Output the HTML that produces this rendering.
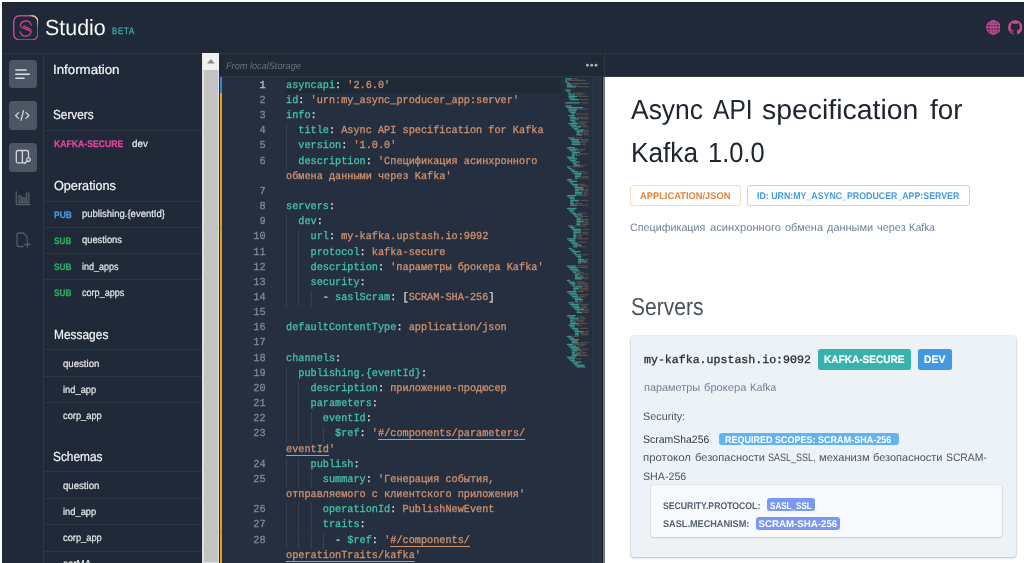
<!DOCTYPE html>
<html lang="ru">
<head>
<meta charset="utf-8">
<title>AsyncAPI Studio</title>
<style>
html,body{margin:0;padding:0}
body{width:1024px;height:563px;overflow:hidden;background:#fff;position:relative;font-family:"Liberation Sans",sans-serif;text-rendering:geometricPrecision}
#app{position:absolute;left:2px;top:2px;width:1022px;height:561px;background:#1f2937;overflow:hidden}
#app>*{position:absolute;left:-2px;top:-2px;width:1024px;height:563px;margin:0}
.t{position:absolute;white-space:pre;margin:0;font-weight:400;transform-origin:0 50%;filter:blur(.35px)}
.code{position:absolute;left:0;top:0;width:604px;height:563px;overflow:hidden;font-family:"Liberation Mono",monospace;font-size:10.8px;line-height:15.155px}
.cl{position:absolute;left:0;width:604px;height:15.155px;white-space:pre;filter:blur(.35px)}
.cl i{position:absolute;left:226px;width:39.600px;text-align:right;font-style:normal;color:#858b94;transform:scaleX(0.9463);transform-origin:100% 50%;-webkit-text-stroke:.25px currentColor}
.cl i.a{color:#c6c6c6}
.cl .c{position:absolute;left:286px;transform:scaleX(0.9463);transform-origin:0 50%}
.cl b{font-weight:400;-webkit-text-stroke:.3px currentColor}
.k{color:#45c2a8}.s{color:#d0916f}.d{color:#d4d4d4}
.u{text-decoration:underline;text-underline-offset:3px;text-decoration-skip-ink:none;text-decoration-thickness:1px}
</style>
</head>
<body>
<div id="app">
<header>
<div style="position:absolute;left:0;top:52.8px;width:1024px;height:1px;background:#2c3645"></div>
<svg style="position:absolute;left:12.9px;top:14.6px" width="25.6" height="25.6" viewBox="0 0 25.6 25.6" fill="none">
<defs><linearGradient id="lg" gradientUnits="userSpaceOnUse" x1="16.2" y1=".8" x2="18.6" y2="-.8"><stop offset="0" stop-color="#d6409a"/><stop offset="1" stop-color="#eec3a2"/></linearGradient></defs>
<rect x=".7" y=".7" width="24.2" height="24.3" rx="6" stroke="url(#lg)" stroke-width="1.4"/>
<g stroke="#d6409a" stroke-width="1.3" stroke-linecap="round" transform="translate(0 .7)">
<path d="M7.2 10.3a5.6 5.6 0 0 1 11-.8"/>
<path d="M18.2 15.300a5.600 5.600 0 0 1-11 .9"/>
<path d="M8 11.300L16.900 15.300M10.700 10.500L17.500 13.700"/>
</g>
</svg>
<span class="t" style="left:45.20px;top:13.18px;font-size:22px;line-height:29px;color:#f9fafb;transform:scaleX(0.9730);">Studio</span>
<span class="t" style="left:111.90px;top:25.28px;font-size:9.3px;line-height:12px;color:#3aa6a2;letter-spacing:0.900px;transform:scaleX(0.8403);-webkit-text-stroke:.35px #3aa6a2;">BETA</span>
<svg style="position:absolute;left:985.700px;top:20px" width="14.800" height="14.800" viewBox="0 0 24 24" fill="none" stroke="#cf4593" stroke-width="1.900">
<circle cx="12" cy="12" r="10.800" fill="#cf4593" fill-opacity=".3"/><ellipse cx="12" cy="12" rx="4.500" ry="10.800"/><path d="M12 1.200v21.600M1.200 12h21.600M3 6.600h18M3 17.400h18"/></svg>
<svg style="position:absolute;left:1007.600px;top:20.200px" width="14.500" height="14.500" viewBox="0 0 24 24" fill="#cf4593"><path d="M12 .3C5.400.3 0 5.700 0 12.300c0 5.300 3.400 9.800 8.200 11.400.6.100.8-.3.8-.6v-2c-3.300.7-4-1.600-4-1.600-.5-1.400-1.300-1.800-1.300-1.800-1.100-.7.100-.7.100-.7 1.200.1 1.800 1.200 1.800 1.200 1.100 1.800 2.800 1.300 3.500 1 .1-.8.4-1.300.8-1.600-2.700-.3-5.500-1.300-5.500-5.900 0-1.300.5-2.400 1.200-3.200-.1-.3-.5-1.500.1-3.200 0 0 1-.3 3.300 1.200 1-.3 2-.4 3-.4s2 .1 3 .4c2.300-1.500 3.300-1.200 3.300-1.200.6 1.700.2 2.900.1 3.200.8.800 1.200 1.900 1.200 3.200 0 4.600-2.800 5.600-5.500 5.900.4.400.8 1.100.8 2.200v3.300c0 .3.200.7.800.6 4.800-1.600 8.200-6.100 8.200-11.400C24 5.700 18.600.3 12 .3z"/></svg>
</header>
<aside>
<div style="position:absolute;left:43px;top:53px;width:1px;height:510px;background:#2c3645"></div>
<div style="position:absolute;left:8.80px;top:59.60px;width:28.40px;height:28.90px;background:#4b5563;border-radius:3.5px;"></div>
<div style="position:absolute;left:8.80px;top:101.30px;width:28.40px;height:28.90px;background:#4b5563;border-radius:3.5px;"></div>
<div style="position:absolute;left:8.80px;top:142.90px;width:28.40px;height:28.90px;background:#4b5563;border-radius:3.5px;"></div>
<svg style="position:absolute;left:14px;top:65.6px" width="18" height="16" viewBox="0 0 18 16" stroke="#dcdfe3" stroke-width="1.5" stroke-linecap="round" fill="none"><path d="M1.8 4.1h10.400M1.8 8.15h13.600M1.800 12.200h8.200"/></svg>
<svg style="position:absolute;left:13.9px;top:108px" width="17" height="15" viewBox="0 0 17 15" stroke="#d3d6db" stroke-width="1.3" stroke-linecap="round" stroke-linejoin="round" fill="none"><path d="M4.500 4.600L1.600 7.500l2.900 2.900M12 4.600l2.900 2.900-2.900 2.900M9.600 2.600L7 12.400"/></svg>
<svg style="position:absolute;left:15px;top:149px" width="17" height="17" viewBox="0 0 17 17" stroke="#d3d6db" stroke-width="1.3" stroke-linecap="round" stroke-linejoin="round" fill="none"><path d="M9.800 13.800H2.800a1.500 1.500 0 0 1-1.500-1.500V3a1.500 1.500 0 0 1 1.500-1.500h9.200a1.500 1.500 0 0 1 1.500 1.500v5.300M7.400 1.500v12.300"/><circle cx="13.500" cy="10.700" r="1.800"/><path d="M12.200 12l-2.400 2.600"/></svg>
<svg style="position:absolute;left:14.5px;top:189.500px" width="16" height="16" viewBox="0 0 16 16" stroke="#535d6c" stroke-width="1.3" stroke-linecap="round" stroke-linejoin="round" fill="none"><path d="M1.300 1.800v12.700h13.400"/><rect x="3.900" y="6.200" width="2.300" height="6.300"/><rect x="7.700" y="7.800" width="2.300" height="4.700"/><rect x="11.500" y="3.200" width="2.300" height="9.300"/></svg>
<svg style="position:absolute;left:15.500px;top:231.500px" width="16" height="17" viewBox="0 0 16 17" stroke="#535d6c" stroke-width="1.300" stroke-linecap="round" stroke-linejoin="round" fill="none"><path d="M7 14.500H2.600A1.600 1.600 0 0 1 1 12.900V2.600A1.600 1.600 0 0 1 2.600 1h4.800l3.600 3.600v3.900M11.500 10v5M9 12.500h5"/></svg>
</aside>
<nav>
<span class="t" style="left:52.90px;top:60.93px;font-size:13.2px;line-height:17px;color:#f3f4f6;transform:scaleX(1.0071);-webkit-text-stroke:.22px currentColor;">Information</span>
<span class="t" style="left:53.20px;top:106.43px;font-size:13.2px;line-height:17px;color:#f3f4f6;transform:scaleX(0.8927);-webkit-text-stroke:.22px currentColor;">Servers</span>
<div style="position:absolute;left:44.00px;top:129.50px;width:158.00px;height:1.00px;background:#2c3645;"></div>
<span class="t" style="left:53.80px;top:139.07px;font-size:9.6px;line-height:12px;color:#e0479e;transform:scaleX(0.9010);font-weight:700;-webkit-text-stroke:.25px #e0479e;">KAFKA-SECURE</span>
<span class="t" style="left:132.00px;top:138.40px;font-size:10.1px;line-height:13px;color:#e5e7eb;transform:scaleX(0.9702);-webkit-text-stroke:.22px currentColor;">dev</span>
<span class="t" style="left:53.60px;top:176.83px;font-size:13.2px;line-height:17px;color:#f3f4f6;transform:scaleX(0.9586);-webkit-text-stroke:.22px currentColor;">Operations</span>
<div style="position:absolute;left:44.00px;top:200.70px;width:158.00px;height:1.00px;background:#2c3645;"></div>
<span class="t" style="left:53.80px;top:208.98px;font-size:9.3px;line-height:12px;color:#4299e1;transform:scaleX(0.9116);font-weight:700;-webkit-text-stroke:.3px #4299e1;">PUB</span>
<span class="t" style="left:82.00px;top:208.20px;font-size:10.1px;line-height:13px;color:#e5e7eb;transform:scaleX(0.9414);-webkit-text-stroke:.22px currentColor;">publishing.{eventId}</span>
<div style="position:absolute;left:44.00px;top:226.60px;width:158.00px;height:1.00px;background:#2c3645;"></div>
<span class="t" style="left:53.80px;top:235.13px;font-size:9.3px;line-height:12px;color:#2fa862;transform:scaleX(0.8861);font-weight:700;-webkit-text-stroke:.3px #2fa862;">SUB</span>
<span class="t" style="left:82.00px;top:234.35px;font-size:10.1px;line-height:13px;color:#e5e7eb;transform:scaleX(0.9251);-webkit-text-stroke:.22px currentColor;">questions</span>
<div style="position:absolute;left:44.00px;top:252.75px;width:158.00px;height:1.00px;background:#2c3645;"></div>
<span class="t" style="left:53.80px;top:261.28px;font-size:9.3px;line-height:12px;color:#2fa862;transform:scaleX(0.8861);font-weight:700;-webkit-text-stroke:.3px #2fa862;">SUB</span>
<span class="t" style="left:82.00px;top:260.50px;font-size:10.1px;line-height:13px;color:#e5e7eb;transform:scaleX(0.8927);-webkit-text-stroke:.22px currentColor;">ind_apps</span>
<div style="position:absolute;left:44.00px;top:278.90px;width:158.00px;height:1.00px;background:#2c3645;"></div>
<span class="t" style="left:53.80px;top:287.43px;font-size:9.3px;line-height:12px;color:#2fa862;transform:scaleX(0.8861);font-weight:700;-webkit-text-stroke:.3px #2fa862;">SUB</span>
<span class="t" style="left:82.00px;top:286.65px;font-size:10.1px;line-height:13px;color:#e5e7eb;transform:scaleX(0.8989);-webkit-text-stroke:.22px currentColor;">corp_apps</span>
<span class="t" style="left:53.60px;top:326.13px;font-size:13.2px;line-height:17px;color:#f3f4f6;transform:scaleX(0.9042);-webkit-text-stroke:.22px currentColor;">Messages</span>
<div style="position:absolute;left:44.00px;top:348.50px;width:158.00px;height:1.00px;background:#2c3645;"></div>
<span class="t" style="left:62.80px;top:357.60px;font-size:10.1px;line-height:13px;color:#e5e7eb;transform:scaleX(0.9532);-webkit-text-stroke:.22px currentColor;">question</span>
<div style="position:absolute;left:44.00px;top:376.00px;width:158.00px;height:1.00px;background:#2c3645;"></div>
<span class="t" style="left:62.80px;top:383.75px;font-size:10.1px;line-height:13px;color:#e5e7eb;transform:scaleX(0.9236);-webkit-text-stroke:.22px currentColor;">ind_app</span>
<div style="position:absolute;left:44.00px;top:402.15px;width:158.00px;height:1.00px;background:#2c3645;"></div>
<span class="t" style="left:62.80px;top:409.90px;font-size:10.1px;line-height:13px;color:#e5e7eb;transform:scaleX(0.9212);-webkit-text-stroke:.22px currentColor;">corp_app</span>
<span class="t" style="left:53.20px;top:448.13px;font-size:13.2px;line-height:17px;color:#f3f4f6;transform:scaleX(0.9014);-webkit-text-stroke:.22px currentColor;">Schemas</span>
<div style="position:absolute;left:44.00px;top:471.00px;width:158.00px;height:1.00px;background:#2c3645;"></div>
<span class="t" style="left:62.80px;top:479.80px;font-size:10.1px;line-height:13px;color:#e5e7eb;transform:scaleX(0.9532);-webkit-text-stroke:.22px currentColor;">question</span>
<div style="position:absolute;left:44.00px;top:498.20px;width:158.00px;height:1.00px;background:#2c3645;"></div>
<span class="t" style="left:62.80px;top:505.95px;font-size:10.1px;line-height:13px;color:#e5e7eb;transform:scaleX(0.9236);-webkit-text-stroke:.22px currentColor;">ind_app</span>
<div style="position:absolute;left:44.00px;top:524.35px;width:158.00px;height:1.00px;background:#2c3645;"></div>
<span class="t" style="left:62.80px;top:532.10px;font-size:10.1px;line-height:13px;color:#e5e7eb;transform:scaleX(0.9212);-webkit-text-stroke:.22px currentColor;">corp_app</span>
<div style="position:absolute;left:44.00px;top:550.50px;width:158.00px;height:1.00px;background:#2c3645;"></div>
<span class="t" style="left:62.80px;top:558.25px;font-size:10.1px;line-height:13px;color:#e5e7eb;transform:scaleX(0.9664);-webkit-text-stroke:.22px currentColor;">corMA</span>
<div style="position:absolute;left:44.00px;top:576.65px;width:158.00px;height:1.00px;background:#2c3645;"></div>
<div style="position:absolute;left:202.30px;top:53.30px;width:16.80px;height:509.70px;background:#dcdfe3;"></div>
<div style="position:absolute;left:202.30px;top:53.30px;width:16.80px;height:16.70px;background:#f1f1f1;"></div>
<div style="position:absolute;left:204.00px;top:70.00px;width:14.00px;height:492.20px;background:#c3c3c3;"></div>
<svg style="position:absolute;left:206.800px;top:59.400px" width="7.800" height="4.600" viewBox="0 0 8 4.600"><path d="M4 0L8 4.600H0z" fill="#8a8a8a"/></svg>
</nav>
<section>
<div style="position:absolute;left:219.10px;top:76.60px;width:384.90px;height:486.40px;background:#252f3f;"></div>
<div style="position:absolute;left:219.10px;top:76.20px;width:804.90px;height:0.80px;background:#2c3645;"></div>
<span class="t" style="left:226.30px;top:60.97px;font-size:9.6px;line-height:12px;color:#69717e;transform:scaleX(0.9549);font-style:italic;">From localStorage</span>
<svg style="position:absolute;left:584px;top:62px" width="16" height="7" viewBox="0 0 16 7" fill="#a9afb8"><circle cx="3.400" cy="3.300" r="1.450"/><circle cx="7.700" cy="3.300" r="1.450"/><circle cx="12" cy="3.300" r="1.450"/></svg>
<div style="position:absolute;left:219.80px;top:77.00px;width:2.70px;height:15.60px;background:#3b82d6;"></div>
<div style="position:absolute;left:219.80px;top:92.60px;width:2.70px;height:470.40px;background:#e5a00d;"></div>
<div style="position:absolute;left:219.80px;top:227.50px;width:2.70px;height:1.30px;background:#b88a3a;"></div>
<div style="position:absolute;left:219.80px;top:530.50px;width:2.70px;height:1.30px;background:#b88a3a;"></div>
<div style="position:absolute;left:286.00px;top:77.60px;width:274.50px;height:15.00px;background:#1f2a37;"></div>
<div class="code"><div style="position:absolute;left:286.00px;top:124.31px;width:0.80px;height:15.16px;background:#364152;"></div><div style="position:absolute;left:286.00px;top:139.47px;width:0.80px;height:15.16px;background:#364152;"></div><div style="position:absolute;left:286.00px;top:154.62px;width:0.80px;height:15.16px;background:#364152;"></div><div style="position:absolute;left:286.00px;top:215.24px;width:0.80px;height:15.16px;background:#364152;"></div><div style="position:absolute;left:286.00px;top:230.40px;width:0.80px;height:15.16px;background:#364152;"></div><div style="position:absolute;left:298.27px;top:230.40px;width:0.80px;height:15.16px;background:#364152;"></div><div style="position:absolute;left:286.00px;top:245.55px;width:0.80px;height:15.16px;background:#364152;"></div><div style="position:absolute;left:298.27px;top:245.55px;width:0.80px;height:15.16px;background:#364152;"></div><div style="position:absolute;left:286.00px;top:260.71px;width:0.80px;height:15.15px;background:#364152;"></div><div style="position:absolute;left:298.27px;top:260.71px;width:0.80px;height:15.15px;background:#364152;"></div><div style="position:absolute;left:286.00px;top:275.87px;width:0.80px;height:15.15px;background:#364152;"></div><div style="position:absolute;left:298.27px;top:275.87px;width:0.80px;height:15.15px;background:#364152;"></div><div style="position:absolute;left:286.00px;top:291.02px;width:0.80px;height:15.15px;background:#364152;"></div><div style="position:absolute;left:298.27px;top:291.02px;width:0.80px;height:15.15px;background:#364152;"></div><div style="position:absolute;left:310.53px;top:291.02px;width:0.80px;height:15.15px;background:#364152;"></div><div style="position:absolute;left:286.00px;top:366.79px;width:0.80px;height:15.15px;background:#364152;"></div><div style="position:absolute;left:286.00px;top:381.95px;width:0.80px;height:15.15px;background:#364152;"></div><div style="position:absolute;left:298.27px;top:381.95px;width:0.80px;height:15.15px;background:#364152;"></div><div style="position:absolute;left:286.00px;top:397.11px;width:0.80px;height:15.15px;background:#364152;"></div><div style="position:absolute;left:298.27px;top:397.11px;width:0.80px;height:15.15px;background:#364152;"></div><div style="position:absolute;left:286.00px;top:412.26px;width:0.80px;height:15.15px;background:#364152;"></div><div style="position:absolute;left:298.27px;top:412.26px;width:0.80px;height:15.15px;background:#364152;"></div><div style="position:absolute;left:310.53px;top:412.26px;width:0.80px;height:15.15px;background:#364152;"></div><div style="position:absolute;left:286.00px;top:427.41px;width:0.80px;height:15.15px;background:#364152;"></div><div style="position:absolute;left:298.27px;top:427.41px;width:0.80px;height:15.15px;background:#364152;"></div><div style="position:absolute;left:310.53px;top:427.41px;width:0.80px;height:15.15px;background:#364152;"></div><div style="position:absolute;left:322.80px;top:427.41px;width:0.80px;height:15.15px;background:#364152;"></div><div style="position:absolute;left:286.00px;top:457.73px;width:0.80px;height:15.15px;background:#364152;"></div><div style="position:absolute;left:298.27px;top:457.73px;width:0.80px;height:15.15px;background:#364152;"></div><div style="position:absolute;left:286.00px;top:472.88px;width:0.80px;height:15.15px;background:#364152;"></div><div style="position:absolute;left:298.27px;top:472.88px;width:0.80px;height:15.15px;background:#364152;"></div><div style="position:absolute;left:310.53px;top:472.88px;width:0.80px;height:15.15px;background:#364152;"></div><div style="position:absolute;left:286.00px;top:503.19px;width:0.80px;height:15.15px;background:#364152;"></div><div style="position:absolute;left:298.27px;top:503.19px;width:0.80px;height:15.15px;background:#364152;"></div><div style="position:absolute;left:310.53px;top:503.19px;width:0.80px;height:15.15px;background:#364152;"></div><div style="position:absolute;left:286.00px;top:518.35px;width:0.80px;height:15.15px;background:#364152;"></div><div style="position:absolute;left:298.27px;top:518.35px;width:0.80px;height:15.15px;background:#364152;"></div><div style="position:absolute;left:310.53px;top:518.35px;width:0.80px;height:15.15px;background:#364152;"></div><div style="position:absolute;left:286.00px;top:533.50px;width:0.80px;height:15.15px;background:#364152;"></div><div style="position:absolute;left:298.27px;top:533.50px;width:0.80px;height:15.15px;background:#364152;"></div><div style="position:absolute;left:310.53px;top:533.50px;width:0.80px;height:15.15px;background:#364152;"></div><div style="position:absolute;left:322.80px;top:533.50px;width:0.80px;height:15.15px;background:#364152;"></div><div class="cl" style="top:78.85px"><i class="n a">1</i><span class="c" style="padding-left:0.00px"><b class="k">asyncapi</b><b class="d">: </b><b class="s">&#x27;2.6.0&#x27;</b></span></div>
<div class="cl" style="top:94.00px"><i class="n">2</i><span class="c" style="padding-left:0.00px"><b class="k">id</b><b class="d">: </b><b class="s">&#x27;urn:my_async_producer_app:server&#x27;</b></span></div>
<div class="cl" style="top:109.16px"><i class="n">3</i><span class="c" style="padding-left:0.00px"><b class="k">info</b><b class="d">:</b></span></div>
<div class="cl" style="top:124.31px"><i class="n">4</i><span class="c" style="padding-left:12.96px"><b class="k">title</b><b class="d">: </b><b class="s">Async API specification for Kafka</b></span></div>
<div class="cl" style="top:139.47px"><i class="n">5</i><span class="c" style="padding-left:12.96px"><b class="k">version</b><b class="d">: </b><b class="s">&#x27;1.0.0&#x27;</b></span></div>
<div class="cl" style="top:154.62px"><i class="n">6</i><span class="c" style="padding-left:12.96px"><b class="k">description</b><b class="d">: </b><b class="s">&#x27;Спецификация асинхронного</b></span></div>
<div class="cl" style="top:169.78px"><span class="c" style="padding-left:0.00px"><b class="s">обмена данными через Kafka&#x27;</b></span></div>
<div class="cl" style="top:184.94px"><i class="n">7</i><span class="c" style="padding-left:0.00px"></span></div>
<div class="cl" style="top:200.09px"><i class="n">8</i><span class="c" style="padding-left:0.00px"><b class="k">servers</b><b class="d">:</b></span></div>
<div class="cl" style="top:215.24px"><i class="n">9</i><span class="c" style="padding-left:12.96px"><b class="k">dev</b><b class="d">:</b></span></div>
<div class="cl" style="top:230.40px"><i class="n">10</i><span class="c" style="padding-left:25.92px"><b class="k">url</b><b class="d">: </b><b class="s">my-kafka.upstash.io:9092</b></span></div>
<div class="cl" style="top:245.55px"><i class="n">11</i><span class="c" style="padding-left:25.92px"><b class="k">protocol</b><b class="d">: </b><b class="s">kafka-secure</b></span></div>
<div class="cl" style="top:260.71px"><i class="n">12</i><span class="c" style="padding-left:25.92px"><b class="k">description</b><b class="d">: </b><b class="s">&#x27;параметры брокера Kafka&#x27;</b></span></div>
<div class="cl" style="top:275.87px"><i class="n">13</i><span class="c" style="padding-left:25.92px"><b class="k">security</b><b class="d">:</b></span></div>
<div class="cl" style="top:291.02px"><i class="n">14</i><span class="c" style="padding-left:38.89px"><b class="d">- </b><b class="k">saslScram</b><b class="d">: [</b><b class="s">SCRAM-SHA-256</b><b class="d">]</b></span></div>
<div class="cl" style="top:306.17px"><i class="n">15</i><span class="c" style="padding-left:0.00px"></span></div>
<div class="cl" style="top:321.33px"><i class="n">16</i><span class="c" style="padding-left:0.00px"><b class="k">defaultContentType</b><b class="d">: </b><b class="s">application/json</b></span></div>
<div class="cl" style="top:336.49px"><i class="n">17</i><span class="c" style="padding-left:0.00px"></span></div>
<div class="cl" style="top:351.64px"><i class="n">18</i><span class="c" style="padding-left:0.00px"><b class="k">channels</b><b class="d">:</b></span></div>
<div class="cl" style="top:366.79px"><i class="n">19</i><span class="c" style="padding-left:12.96px"><b class="k">publishing.{eventId}</b><b class="d">:</b></span></div>
<div class="cl" style="top:381.95px"><i class="n">20</i><span class="c" style="padding-left:25.92px"><b class="k">description</b><b class="d">: </b><b class="s">приложение-продюсер</b></span></div>
<div class="cl" style="top:397.11px"><i class="n">21</i><span class="c" style="padding-left:25.92px"><b class="k">parameters</b><b class="d">:</b></span></div>
<div class="cl" style="top:412.26px"><i class="n">22</i><span class="c" style="padding-left:38.89px"><b class="k">eventId</b><b class="d">:</b></span></div>
<div class="cl" style="top:427.41px"><i class="n">23</i><span class="c" style="padding-left:51.85px"><b class="k">$ref</b><b class="d">: </b><b class="s">&#x27;</b><b class="s u">#/components/parameters/</b></span></div>
<div class="cl" style="top:442.57px"><span class="c" style="padding-left:0.00px"><b class="s u">eventId</b><b class="s">&#x27;</b></span></div>
<div class="cl" style="top:457.73px"><i class="n">24</i><span class="c" style="padding-left:25.92px"><b class="k">publish</b><b class="d">:</b></span></div>
<div class="cl" style="top:472.88px"><i class="n">25</i><span class="c" style="padding-left:38.89px"><b class="k">summary</b><b class="d">: </b><b class="s">&#x27;Генерация события,</b></span></div>
<div class="cl" style="top:488.03px"><span class="c" style="padding-left:0.00px"><b class="s">отправляемого с клиентского приложения&#x27;</b></span></div>
<div class="cl" style="top:503.19px"><i class="n">26</i><span class="c" style="padding-left:38.89px"><b class="k">operationId</b><b class="d">: </b><b class="s">PublishNewEvent</b></span></div>
<div class="cl" style="top:518.35px"><i class="n">27</i><span class="c" style="padding-left:38.89px"><b class="k">traits</b><b class="d">:</b></span></div>
<div class="cl" style="top:533.50px"><i class="n">28</i><span class="c" style="padding-left:51.85px"><b class="d">- </b><b class="k">$ref</b><b class="d">: </b><b class="s">&#x27;</b><b class="s u">#/components/</b></span></div>
<div class="cl" style="top:548.65px"><span class="c" style="padding-left:0.00px"><b class="s u">operationTraits/kafka</b><b class="s">&#x27;</b></span></div></div>
<svg style="position:absolute;left:564.500px;top:77px" width="27" height="292" viewBox="0 0 27 292"><rect x="0.3" y="1.20" width="6.4" height="1.300" fill="#41b39c" opacity=".78"/><rect x="7.9" y="1.20" width="4.5" height="1.100" fill="#a87a5e" opacity=".42"/><rect x="0.3" y="2.80" width="1.6" height="1.300" fill="#41b39c" opacity=".78"/><rect x="3.1" y="2.80" width="17.9" height="1.100" fill="#a87a5e" opacity=".42"/><rect x="0.3" y="4.40" width="3.2" height="1.300" fill="#41b39c" opacity=".78"/><rect x="1.9" y="6.00" width="4.0" height="1.300" fill="#41b39c" opacity=".78"/><rect x="7.1" y="6.00" width="16.4" height="1.100" fill="#a87a5e" opacity=".42"/><rect x="1.9" y="7.60" width="5.6" height="1.300" fill="#41b39c" opacity=".78"/><rect x="8.7" y="7.60" width="4.5" height="1.100" fill="#a87a5e" opacity=".42"/><rect x="1.9" y="9.20" width="8.8" height="1.300" fill="#41b39c" opacity=".78"/><rect x="11.9" y="9.20" width="11.6" height="1.100" fill="#a87a5e" opacity=".42"/><rect x="0.3" y="12.40" width="5.6" height="1.300" fill="#41b39c" opacity=".78"/><rect x="1.9" y="14.00" width="2.4" height="1.300" fill="#41b39c" opacity=".78"/><rect x="3.5" y="15.60" width="2.4" height="1.300" fill="#41b39c" opacity=".78"/><rect x="7.1" y="15.60" width="12.9" height="1.100" fill="#a87a5e" opacity=".42"/><rect x="3.5" y="17.20" width="6.4" height="1.300" fill="#41b39c" opacity=".78"/><rect x="11.1" y="17.20" width="6.9" height="1.100" fill="#a87a5e" opacity=".42"/><rect x="3.5" y="18.80" width="8.8" height="1.300" fill="#41b39c" opacity=".78"/><rect x="13.5" y="18.80" width="10.0" height="1.100" fill="#a87a5e" opacity=".42"/><rect x="3.5" y="20.40" width="6.4" height="1.300" fill="#41b39c" opacity=".78"/><rect x="5.1" y="22.00" width="8.8" height="1.300" fill="#41b39c" opacity=".78"/><rect x="15.1" y="22.00" width="8.4" height="1.100" fill="#a87a5e" opacity=".42"/><rect x="0.3" y="25.20" width="14.4" height="1.300" fill="#41b39c" opacity=".78"/><rect x="15.9" y="25.20" width="7.6" height="1.100" fill="#a87a5e" opacity=".42"/><rect x="0.3" y="28.40" width="6.4" height="1.300" fill="#41b39c" opacity=".78"/><rect x="1.9" y="30.00" width="16.0" height="1.300" fill="#41b39c" opacity=".78"/><rect x="3.5" y="31.60" width="8.8" height="1.300" fill="#41b39c" opacity=".78"/><rect x="13.5" y="31.60" width="10.0" height="1.100" fill="#a87a5e" opacity=".42"/><rect x="3.5" y="33.20" width="8.0" height="1.300" fill="#41b39c" opacity=".78"/><rect x="5.1" y="34.80" width="5.6" height="1.300" fill="#41b39c" opacity=".78"/><rect x="6.7" y="36.40" width="3.2" height="1.300" fill="#41b39c" opacity=".78"/><rect x="11.1" y="36.40" width="12.4" height="1.100" fill="#a87a5e" opacity=".42"/><rect x="3.5" y="38.00" width="5.6" height="1.300" fill="#41b39c" opacity=".78"/><rect x="5.1" y="39.60" width="5.6" height="1.300" fill="#41b39c" opacity=".78"/><rect x="11.9" y="39.60" width="11.6" height="1.100" fill="#a87a5e" opacity=".42"/><rect x="5.1" y="41.20" width="8.8" height="1.300" fill="#41b39c" opacity=".78"/><rect x="15.1" y="41.20" width="8.4" height="1.100" fill="#a87a5e" opacity=".42"/><rect x="5.1" y="42.80" width="4.8" height="1.300" fill="#41b39c" opacity=".78"/><rect x="6.7" y="44.40" width="4.8" height="1.300" fill="#41b39c" opacity=".78"/><rect x="12.7" y="44.40" width="10.8" height="1.100" fill="#a87a5e" opacity=".42"/><rect x="3.5" y="46.00" width="9.6" height="1.300" fill="#41b39c" opacity=".78"/><rect x="14.3" y="46.00" width="6.0" height="1.100" fill="#a87a5e" opacity=".42"/><rect x="5.1" y="47.60" width="6.4" height="1.300" fill="#41b39c" opacity=".78"/><rect x="12.7" y="47.60" width="8.9" height="1.100" fill="#a87a5e" opacity=".42"/><rect x="6.7" y="49.20" width="9.6" height="1.300" fill="#41b39c" opacity=".78"/><rect x="17.5" y="49.20" width="6.0" height="1.100" fill="#a87a5e" opacity=".42"/><rect x="8.3" y="50.80" width="4.8" height="1.300" fill="#41b39c" opacity=".78"/><rect x="9.9" y="52.40" width="9.6" height="1.300" fill="#41b39c" opacity=".78"/><rect x="20.7" y="52.40" width="2.8" height="1.100" fill="#a87a5e" opacity=".42"/><rect x="11.5" y="54.00" width="6.4" height="1.300" fill="#41b39c" opacity=".78"/><rect x="19.1" y="54.00" width="4.4" height="1.100" fill="#a87a5e" opacity=".42"/><rect x="11.5" y="55.60" width="3.2" height="1.300" fill="#41b39c" opacity=".78"/><rect x="15.9" y="55.60" width="7.6" height="1.100" fill="#a87a5e" opacity=".42"/><rect x="11.5" y="57.20" width="5.6" height="1.300" fill="#41b39c" opacity=".78"/><rect x="18.3" y="57.20" width="5.2" height="1.100" fill="#a87a5e" opacity=".42"/><rect x="3.5" y="60.40" width="6.4" height="1.300" fill="#41b39c" opacity=".78"/><rect x="11.1" y="60.40" width="6.0" height="1.100" fill="#a87a5e" opacity=".42"/><rect x="5.1" y="62.00" width="8.8" height="1.300" fill="#41b39c" opacity=".78"/><rect x="15.1" y="62.00" width="8.4" height="1.100" fill="#a87a5e" opacity=".42"/><rect x="6.7" y="63.60" width="8.0" height="1.300" fill="#41b39c" opacity=".78"/><rect x="15.9" y="63.60" width="7.6" height="1.100" fill="#a87a5e" opacity=".42"/><rect x="6.7" y="65.20" width="8.8" height="1.300" fill="#41b39c" opacity=".78"/><rect x="16.7" y="65.20" width="4.0" height="1.100" fill="#a87a5e" opacity=".42"/><rect x="6.7" y="66.80" width="8.8" height="1.300" fill="#41b39c" opacity=".78"/><rect x="16.7" y="66.80" width="4.0" height="1.100" fill="#a87a5e" opacity=".42"/><rect x="1.9" y="70.00" width="8.0" height="1.300" fill="#41b39c" opacity=".78"/><rect x="3.5" y="71.60" width="9.6" height="1.300" fill="#41b39c" opacity=".78"/><rect x="14.3" y="71.60" width="6.0" height="1.100" fill="#a87a5e" opacity=".42"/><rect x="5.1" y="73.20" width="5.6" height="1.300" fill="#41b39c" opacity=".78"/><rect x="11.9" y="73.20" width="6.0" height="1.100" fill="#a87a5e" opacity=".42"/><rect x="6.7" y="74.80" width="8.0" height="1.300" fill="#41b39c" opacity=".78"/><rect x="6.7" y="76.40" width="5.6" height="1.300" fill="#41b39c" opacity=".78"/><rect x="13.5" y="76.40" width="10.0" height="1.100" fill="#a87a5e" opacity=".42"/><rect x="6.7" y="78.00" width="3.2" height="1.300" fill="#41b39c" opacity=".78"/><rect x="11.1" y="78.00" width="4.0" height="1.100" fill="#a87a5e" opacity=".42"/><rect x="1.9" y="79.60" width="8.0" height="1.300" fill="#41b39c" opacity=".78"/><rect x="3.5" y="81.20" width="8.8" height="1.300" fill="#41b39c" opacity=".78"/><rect x="5.1" y="82.80" width="5.6" height="1.300" fill="#41b39c" opacity=".78"/><rect x="6.7" y="84.40" width="8.0" height="1.300" fill="#41b39c" opacity=".78"/><rect x="8.3" y="86.00" width="3.2" height="1.300" fill="#41b39c" opacity=".78"/><rect x="8.3" y="87.60" width="7.2" height="1.300" fill="#41b39c" opacity=".78"/><rect x="16.7" y="87.60" width="4.0" height="1.100" fill="#a87a5e" opacity=".42"/><rect x="1.9" y="89.20" width="3.2" height="1.300" fill="#41b39c" opacity=".78"/><rect x="6.3" y="89.20" width="11.9" height="1.100" fill="#a87a5e" opacity=".42"/><rect x="3.5" y="90.80" width="3.2" height="1.300" fill="#41b39c" opacity=".78"/><rect x="5.1" y="92.40" width="4.8" height="1.300" fill="#41b39c" opacity=".78"/><rect x="6.7" y="94.00" width="6.4" height="1.300" fill="#41b39c" opacity=".78"/><rect x="14.3" y="94.00" width="6.0" height="1.100" fill="#a87a5e" opacity=".42"/><rect x="8.3" y="95.60" width="8.8" height="1.300" fill="#41b39c" opacity=".78"/><rect x="18.3" y="95.60" width="5.2" height="1.100" fill="#a87a5e" opacity=".42"/><rect x="9.9" y="97.20" width="6.4" height="1.300" fill="#41b39c" opacity=".78"/><rect x="9.9" y="98.80" width="5.6" height="1.300" fill="#41b39c" opacity=".78"/><rect x="16.7" y="98.80" width="6.8" height="1.100" fill="#a87a5e" opacity=".42"/><rect x="9.9" y="100.40" width="3.2" height="1.300" fill="#41b39c" opacity=".78"/><rect x="14.3" y="100.40" width="9.2" height="1.100" fill="#a87a5e" opacity=".42"/><rect x="1.9" y="102.00" width="4.8" height="1.300" fill="#41b39c" opacity=".78"/><rect x="3.5" y="103.60" width="8.8" height="1.300" fill="#41b39c" opacity=".78"/><rect x="5.1" y="105.20" width="3.2" height="1.300" fill="#41b39c" opacity=".78"/><rect x="6.7" y="106.80" width="6.4" height="1.300" fill="#41b39c" opacity=".78"/><rect x="14.3" y="106.80" width="6.0" height="1.100" fill="#a87a5e" opacity=".42"/><rect x="8.3" y="108.40" width="4.8" height="1.300" fill="#41b39c" opacity=".78"/><rect x="14.3" y="108.40" width="9.2" height="1.100" fill="#a87a5e" opacity=".42"/><rect x="9.9" y="110.00" width="8.0" height="1.300" fill="#41b39c" opacity=".78"/><rect x="9.9" y="111.60" width="8.8" height="1.300" fill="#41b39c" opacity=".78"/><rect x="19.9" y="111.60" width="3.6" height="1.100" fill="#a87a5e" opacity=".42"/><rect x="9.9" y="113.20" width="4.0" height="1.300" fill="#41b39c" opacity=".78"/><rect x="15.1" y="113.20" width="8.4" height="1.100" fill="#a87a5e" opacity=".42"/><rect x="9.9" y="114.80" width="7.2" height="1.300" fill="#41b39c" opacity=".78"/><rect x="18.3" y="114.80" width="4.0" height="1.100" fill="#a87a5e" opacity=".42"/><rect x="9.9" y="116.40" width="7.2" height="1.300" fill="#41b39c" opacity=".78"/><rect x="18.3" y="116.40" width="5.2" height="1.100" fill="#a87a5e" opacity=".42"/><rect x="1.9" y="118.00" width="9.6" height="1.300" fill="#41b39c" opacity=".78"/><rect x="12.7" y="118.00" width="8.9" height="1.100" fill="#a87a5e" opacity=".42"/><rect x="3.5" y="119.60" width="5.6" height="1.300" fill="#41b39c" opacity=".78"/><rect x="5.1" y="121.20" width="4.8" height="1.300" fill="#41b39c" opacity=".78"/><rect x="5.1" y="122.80" width="8.8" height="1.300" fill="#41b39c" opacity=".78"/><rect x="15.1" y="122.80" width="8.4" height="1.100" fill="#a87a5e" opacity=".42"/><rect x="5.1" y="124.40" width="3.2" height="1.300" fill="#41b39c" opacity=".78"/><rect x="9.5" y="124.40" width="4.0" height="1.100" fill="#a87a5e" opacity=".42"/><rect x="5.1" y="126.00" width="4.0" height="1.300" fill="#41b39c" opacity=".78"/><rect x="10.3" y="126.00" width="6.9" height="1.100" fill="#a87a5e" opacity=".42"/><rect x="5.1" y="127.60" width="7.2" height="1.300" fill="#41b39c" opacity=".78"/><rect x="13.5" y="127.60" width="9.9" height="1.100" fill="#a87a5e" opacity=".42"/><rect x="1.9" y="130.80" width="9.6" height="1.300" fill="#41b39c" opacity=".78"/><rect x="3.5" y="132.40" width="6.4" height="1.300" fill="#41b39c" opacity=".78"/><rect x="5.1" y="134.00" width="3.2" height="1.300" fill="#41b39c" opacity=".78"/><rect x="6.7" y="135.60" width="4.8" height="1.300" fill="#41b39c" opacity=".78"/><rect x="12.7" y="135.60" width="8.9" height="1.100" fill="#a87a5e" opacity=".42"/><rect x="8.3" y="137.20" width="8.8" height="1.300" fill="#41b39c" opacity=".78"/><rect x="9.9" y="138.80" width="3.2" height="1.300" fill="#41b39c" opacity=".78"/><rect x="14.3" y="138.80" width="8.9" height="1.100" fill="#a87a5e" opacity=".42"/><rect x="11.5" y="140.40" width="5.6" height="1.300" fill="#41b39c" opacity=".78"/><rect x="11.5" y="142.00" width="4.0" height="1.300" fill="#41b39c" opacity=".78"/><rect x="16.7" y="142.00" width="6.8" height="1.100" fill="#a87a5e" opacity=".42"/><rect x="11.5" y="143.60" width="7.2" height="1.300" fill="#41b39c" opacity=".78"/><rect x="19.9" y="143.60" width="3.6" height="1.100" fill="#a87a5e" opacity=".42"/><rect x="11.5" y="145.20" width="4.0" height="1.300" fill="#41b39c" opacity=".78"/><rect x="16.7" y="145.20" width="6.8" height="1.100" fill="#a87a5e" opacity=".42"/><rect x="11.5" y="146.80" width="4.0" height="1.300" fill="#41b39c" opacity=".78"/><rect x="16.7" y="146.80" width="6.8" height="1.100" fill="#a87a5e" opacity=".42"/><rect x="3.5" y="148.40" width="4.8" height="1.300" fill="#41b39c" opacity=".78"/><rect x="9.5" y="148.40" width="11.9" height="1.100" fill="#a87a5e" opacity=".42"/><rect x="5.1" y="150.00" width="4.8" height="1.300" fill="#41b39c" opacity=".78"/><rect x="6.7" y="151.60" width="8.8" height="1.300" fill="#41b39c" opacity=".78"/><rect x="16.7" y="151.60" width="6.8" height="1.100" fill="#a87a5e" opacity=".42"/><rect x="8.3" y="153.20" width="8.0" height="1.300" fill="#41b39c" opacity=".78"/><rect x="8.3" y="154.80" width="7.2" height="1.300" fill="#41b39c" opacity=".78"/><rect x="16.7" y="154.80" width="6.8" height="1.100" fill="#a87a5e" opacity=".42"/><rect x="8.3" y="156.40" width="3.2" height="1.300" fill="#41b39c" opacity=".78"/><rect x="12.7" y="156.40" width="10.8" height="1.100" fill="#a87a5e" opacity=".42"/><rect x="8.3" y="158.00" width="3.2" height="1.300" fill="#41b39c" opacity=".78"/><rect x="12.7" y="158.00" width="4.0" height="1.100" fill="#a87a5e" opacity=".42"/><rect x="8.3" y="159.60" width="3.2" height="1.300" fill="#41b39c" opacity=".78"/><rect x="12.7" y="159.60" width="4.0" height="1.100" fill="#a87a5e" opacity=".42"/><rect x="1.9" y="161.20" width="8.8" height="1.300" fill="#41b39c" opacity=".78"/><rect x="11.9" y="161.20" width="11.6" height="1.100" fill="#a87a5e" opacity=".42"/><rect x="3.5" y="162.80" width="6.4" height="1.300" fill="#41b39c" opacity=".78"/><rect x="5.1" y="164.40" width="6.4" height="1.300" fill="#41b39c" opacity=".78"/><rect x="12.7" y="164.40" width="8.9" height="1.100" fill="#a87a5e" opacity=".42"/><rect x="6.7" y="166.00" width="6.4" height="1.300" fill="#41b39c" opacity=".78"/><rect x="8.3" y="167.60" width="8.0" height="1.300" fill="#41b39c" opacity=".78"/><rect x="8.3" y="169.20" width="4.0" height="1.300" fill="#41b39c" opacity=".78"/><rect x="13.5" y="169.20" width="6.9" height="1.100" fill="#a87a5e" opacity=".42"/><rect x="3.5" y="170.80" width="3.2" height="1.300" fill="#41b39c" opacity=".78"/><rect x="5.1" y="172.40" width="4.8" height="1.300" fill="#41b39c" opacity=".78"/><rect x="6.7" y="174.00" width="8.8" height="1.300" fill="#41b39c" opacity=".78"/><rect x="8.3" y="175.60" width="3.2" height="1.300" fill="#41b39c" opacity=".78"/><rect x="9.9" y="177.20" width="6.4" height="1.300" fill="#41b39c" opacity=".78"/><rect x="17.5" y="177.20" width="6.0" height="1.100" fill="#a87a5e" opacity=".42"/><rect x="11.5" y="178.80" width="4.8" height="1.300" fill="#41b39c" opacity=".78"/><rect x="13.1" y="180.40" width="3.2" height="1.300" fill="#41b39c" opacity=".78"/><rect x="13.1" y="182.00" width="5.6" height="1.300" fill="#41b39c" opacity=".78"/><rect x="19.9" y="182.00" width="3.6" height="1.100" fill="#a87a5e" opacity=".42"/><rect x="13.1" y="183.60" width="8.8" height="1.300" fill="#41b39c" opacity=".78"/><rect x="13.1" y="185.20" width="3.2" height="1.300" fill="#41b39c" opacity=".78"/><rect x="17.5" y="185.20" width="6.0" height="1.100" fill="#a87a5e" opacity=".42"/><rect x="1.9" y="188.40" width="8.8" height="1.300" fill="#41b39c" opacity=".78"/><rect x="11.9" y="188.40" width="11.6" height="1.100" fill="#a87a5e" opacity=".42"/><rect x="3.5" y="190.00" width="8.8" height="1.300" fill="#41b39c" opacity=".78"/><rect x="13.5" y="190.00" width="8.9" height="1.100" fill="#a87a5e" opacity=".42"/><rect x="5.1" y="191.60" width="8.0" height="1.300" fill="#41b39c" opacity=".78"/><rect x="6.7" y="193.20" width="8.0" height="1.300" fill="#41b39c" opacity=".78"/><rect x="8.3" y="194.80" width="3.2" height="1.300" fill="#41b39c" opacity=".78"/><rect x="12.7" y="194.80" width="6.0" height="1.100" fill="#a87a5e" opacity=".42"/><rect x="9.9" y="196.40" width="5.6" height="1.300" fill="#41b39c" opacity=".78"/><rect x="16.7" y="196.40" width="6.8" height="1.100" fill="#a87a5e" opacity=".42"/><rect x="9.9" y="198.00" width="3.2" height="1.300" fill="#41b39c" opacity=".78"/><rect x="14.3" y="198.00" width="4.0" height="1.100" fill="#a87a5e" opacity=".42"/><rect x="9.9" y="199.60" width="8.8" height="1.300" fill="#41b39c" opacity=".78"/><rect x="19.9" y="199.60" width="3.6" height="1.100" fill="#a87a5e" opacity=".42"/><rect x="9.9" y="201.20" width="7.2" height="1.300" fill="#41b39c" opacity=".78"/><rect x="18.3" y="201.20" width="4.0" height="1.100" fill="#a87a5e" opacity=".42"/><rect x="1.9" y="202.80" width="3.2" height="1.300" fill="#41b39c" opacity=".78"/><rect x="3.5" y="204.40" width="6.4" height="1.300" fill="#41b39c" opacity=".78"/><rect x="11.1" y="204.40" width="8.9" height="1.100" fill="#a87a5e" opacity=".42"/><rect x="5.1" y="206.00" width="5.6" height="1.300" fill="#41b39c" opacity=".78"/><rect x="11.9" y="206.00" width="11.6" height="1.100" fill="#a87a5e" opacity=".42"/><rect x="6.7" y="207.60" width="3.2" height="1.300" fill="#41b39c" opacity=".78"/><rect x="11.1" y="207.60" width="11.9" height="1.100" fill="#a87a5e" opacity=".42"/><rect x="8.3" y="209.20" width="8.8" height="1.300" fill="#41b39c" opacity=".78"/><rect x="18.3" y="209.20" width="5.2" height="1.100" fill="#a87a5e" opacity=".42"/><rect x="8.3" y="210.80" width="5.6" height="1.300" fill="#41b39c" opacity=".78"/><rect x="15.1" y="210.80" width="8.4" height="1.100" fill="#a87a5e" opacity=".42"/><rect x="8.3" y="212.40" width="3.2" height="1.300" fill="#41b39c" opacity=".78"/><rect x="12.7" y="212.40" width="10.8" height="1.100" fill="#a87a5e" opacity=".42"/><rect x="1.9" y="214.00" width="9.6" height="1.300" fill="#41b39c" opacity=".78"/><rect x="12.7" y="214.00" width="6.0" height="1.100" fill="#a87a5e" opacity=".42"/><rect x="3.5" y="215.60" width="8.0" height="1.300" fill="#41b39c" opacity=".78"/><rect x="5.1" y="217.20" width="8.0" height="1.300" fill="#41b39c" opacity=".78"/><rect x="14.3" y="217.20" width="9.2" height="1.100" fill="#a87a5e" opacity=".42"/><rect x="6.7" y="218.80" width="6.4" height="1.300" fill="#41b39c" opacity=".78"/><rect x="14.3" y="218.80" width="6.0" height="1.100" fill="#a87a5e" opacity=".42"/><rect x="8.3" y="220.40" width="8.0" height="1.300" fill="#41b39c" opacity=".78"/><rect x="9.9" y="222.00" width="8.0" height="1.300" fill="#41b39c" opacity=".78"/><rect x="9.9" y="223.60" width="3.2" height="1.300" fill="#41b39c" opacity=".78"/><rect x="14.3" y="223.60" width="4.0" height="1.100" fill="#a87a5e" opacity=".42"/><rect x="3.5" y="225.20" width="5.6" height="1.300" fill="#41b39c" opacity=".78"/><rect x="10.3" y="225.20" width="6.0" height="1.100" fill="#a87a5e" opacity=".42"/><rect x="5.1" y="226.80" width="8.8" height="1.300" fill="#41b39c" opacity=".78"/><rect x="15.1" y="226.80" width="8.4" height="1.100" fill="#a87a5e" opacity=".42"/><rect x="6.7" y="228.40" width="8.0" height="1.300" fill="#41b39c" opacity=".78"/><rect x="15.9" y="228.40" width="6.0" height="1.100" fill="#a87a5e" opacity=".42"/><rect x="8.3" y="230.00" width="6.4" height="1.300" fill="#41b39c" opacity=".78"/><rect x="15.9" y="230.00" width="6.0" height="1.100" fill="#a87a5e" opacity=".42"/><rect x="9.9" y="231.60" width="9.6" height="1.300" fill="#41b39c" opacity=".78"/><rect x="20.7" y="231.60" width="2.8" height="1.100" fill="#a87a5e" opacity=".42"/><rect x="11.5" y="233.20" width="3.2" height="1.300" fill="#41b39c" opacity=".78"/><rect x="15.9" y="233.20" width="7.6" height="1.100" fill="#a87a5e" opacity=".42"/><rect x="11.5" y="234.80" width="5.6" height="1.300" fill="#41b39c" opacity=".78"/><rect x="18.3" y="234.80" width="5.2" height="1.100" fill="#a87a5e" opacity=".42"/><rect x="1.9" y="238.00" width="8.8" height="1.300" fill="#41b39c" opacity=".78"/><rect x="3.5" y="239.60" width="6.4" height="1.300" fill="#41b39c" opacity=".78"/><rect x="11.1" y="239.60" width="8.9" height="1.100" fill="#a87a5e" opacity=".42"/><rect x="5.1" y="241.20" width="8.8" height="1.300" fill="#41b39c" opacity=".78"/><rect x="15.1" y="241.20" width="6.0" height="1.100" fill="#a87a5e" opacity=".42"/><rect x="5.1" y="242.80" width="3.2" height="1.300" fill="#41b39c" opacity=".78"/><rect x="9.5" y="242.80" width="9.9" height="1.100" fill="#a87a5e" opacity=".42"/><rect x="5.1" y="244.40" width="5.6" height="1.300" fill="#41b39c" opacity=".78"/><rect x="11.9" y="244.40" width="6.9" height="1.100" fill="#a87a5e" opacity=".42"/><rect x="5.1" y="246.00" width="8.8" height="1.300" fill="#41b39c" opacity=".78"/><rect x="15.1" y="246.00" width="6.9" height="1.100" fill="#a87a5e" opacity=".42"/><rect x="3.5" y="247.60" width="6.4" height="1.300" fill="#41b39c" opacity=".78"/><rect x="11.1" y="247.60" width="6.0" height="1.100" fill="#a87a5e" opacity=".42"/><rect x="5.1" y="249.20" width="4.8" height="1.300" fill="#41b39c" opacity=".78"/><rect x="6.7" y="250.80" width="6.4" height="1.300" fill="#41b39c" opacity=".78"/><rect x="14.3" y="250.80" width="9.2" height="1.100" fill="#a87a5e" opacity=".42"/><rect x="8.3" y="252.40" width="5.6" height="1.300" fill="#41b39c" opacity=".78"/><rect x="9.9" y="254.00" width="8.8" height="1.300" fill="#41b39c" opacity=".78"/><rect x="19.9" y="254.00" width="3.6" height="1.100" fill="#a87a5e" opacity=".42"/><rect x="9.9" y="255.60" width="4.0" height="1.300" fill="#41b39c" opacity=".78"/><rect x="15.1" y="255.60" width="8.4" height="1.100" fill="#a87a5e" opacity=".42"/><rect x="9.9" y="257.20" width="4.0" height="1.300" fill="#41b39c" opacity=".78"/><rect x="15.1" y="257.20" width="8.4" height="1.100" fill="#a87a5e" opacity=".42"/><rect x="1.9" y="258.80" width="4.8" height="1.300" fill="#41b39c" opacity=".78"/><rect x="7.9" y="258.80" width="6.0" height="1.100" fill="#a87a5e" opacity=".42"/><rect x="3.5" y="260.40" width="5.6" height="1.300" fill="#41b39c" opacity=".78"/><rect x="5.1" y="262.00" width="8.8" height="1.300" fill="#41b39c" opacity=".78"/><rect x="6.7" y="263.60" width="5.6" height="1.300" fill="#41b39c" opacity=".78"/><rect x="6.7" y="265.20" width="7.2" height="1.300" fill="#41b39c" opacity=".78"/><rect x="15.1" y="265.20" width="8.4" height="1.100" fill="#a87a5e" opacity=".42"/><rect x="1.9" y="266.80" width="6.4" height="1.300" fill="#41b39c" opacity=".78"/><rect x="9.5" y="266.80" width="11.9" height="1.100" fill="#a87a5e" opacity=".42"/><rect x="3.5" y="268.40" width="8.0" height="1.300" fill="#41b39c" opacity=".78"/><rect x="12.7" y="268.40" width="6.0" height="1.100" fill="#a87a5e" opacity=".42"/><rect x="5.1" y="270.00" width="8.8" height="1.300" fill="#41b39c" opacity=".78"/><rect x="6.7" y="271.60" width="8.8" height="1.300" fill="#41b39c" opacity=".78"/><rect x="16.7" y="271.60" width="6.8" height="1.100" fill="#a87a5e" opacity=".42"/><rect x="6.7" y="273.20" width="5.6" height="1.300" fill="#41b39c" opacity=".78"/><rect x="13.5" y="273.20" width="4.0" height="1.100" fill="#a87a5e" opacity=".42"/><rect x="6.7" y="274.80" width="3.2" height="1.300" fill="#41b39c" opacity=".78"/><rect x="11.1" y="274.80" width="9.9" height="1.100" fill="#a87a5e" opacity=".42"/><rect x="6.7" y="276.40" width="8.8" height="1.300" fill="#41b39c" opacity=".78"/><rect x="16.7" y="276.40" width="4.0" height="1.100" fill="#a87a5e" opacity=".42"/><rect x="6.7" y="278.00" width="5.6" height="1.300" fill="#41b39c" opacity=".78"/><rect x="13.5" y="278.00" width="10.0" height="1.100" fill="#a87a5e" opacity=".42"/><rect x="1.9" y="279.60" width="8.8" height="1.300" fill="#41b39c" opacity=".78"/><rect x="3.5" y="281.20" width="6.4" height="1.300" fill="#41b39c" opacity=".78"/><rect x="11.1" y="281.20" width="6.0" height="1.100" fill="#a87a5e" opacity=".42"/><rect x="5.1" y="282.80" width="4.8" height="1.300" fill="#41b39c" opacity=".78"/><rect x="6.7" y="284.40" width="9.6" height="1.300" fill="#41b39c" opacity=".78"/><rect x="8.3" y="286.00" width="4.8" height="1.300" fill="#41b39c" opacity=".78"/><rect x="9.9" y="287.60" width="9.6" height="1.300" fill="#41b39c" opacity=".78"/><rect x="11.5" y="289.20" width="8.8" height="1.300" fill="#41b39c" opacity=".78"/></svg>
<div style="position:absolute;left:591.50px;top:77.00px;width:10.80px;height:486.00px;background:#273142;border-left:1px solid #2c3749;"></div>
<div style="position:absolute;left:602.30px;top:53.30px;width:1.00px;height:509.70px;background:#1c2431;"></div>
<div style="position:absolute;left:603.40px;top:77.00px;width:1.60px;height:486.00px;background:#6d7786;"></div>
<div style="position:absolute;left:603.50px;top:53.30px;width:1.00px;height:23.70px;background:#2c3645;"></div>
</section>
<main>
<div style="position:absolute;left:605.00px;top:77.30px;width:419.00px;height:485.70px;background:#fff;"></div>
<span class="t" style="left:630.60px;top:92.07px;font-size:27.8px;line-height:36px;color:#20262f;transform:scaleX(0.9511);">Async</span>
<span class="t" style="left:713.00px;top:92.07px;font-size:27.8px;line-height:36px;color:#20262f;transform:scaleX(0.8837);">API</span>
<span class="t" style="left:762.40px;top:92.07px;font-size:27.8px;line-height:36px;color:#20262f;transform:scaleX(1.0223);">specification</span>
<span class="t" style="left:930.00px;top:92.07px;font-size:27.8px;line-height:36px;color:#20262f;">for</span>
<span class="t" style="left:630.60px;top:134.57px;font-size:27.8px;line-height:36px;color:#20262f;transform:scaleX(0.9425);">Kafka</span>
<span class="t" style="left:708.40px;top:134.57px;font-size:27.8px;line-height:36px;color:#20262f;transform:scaleX(0.9154);">1.0.0</span>
<div style="position:absolute;left:630.00px;top:185.30px;width:110.60px;height:20.30px;border:1px solid #fcdcb6;border-radius:3px;box-sizing:border-box;background:#fff;"></div>
<span class="t" style="left:640.00px;top:190.24px;font-size:9.7px;line-height:13px;color:#e4853a;transform:scaleX(0.9614);font-weight:700;">APPLICATION/JSON</span>
<div style="position:absolute;left:747.00px;top:185.30px;width:222.60px;height:20.30px;border:1px solid #b5daf7;border-radius:3px;box-sizing:border-box;background:#fff;"></div>
<span class="t" style="left:757.00px;top:190.24px;font-size:9.7px;line-height:13px;color:#459be2;transform:scaleX(0.9087);font-weight:700;">ID: URN:MY_ASYNC_PRODUCER_APP:SERVER</span>
<span class="t" style="left:630.20px;top:221.16px;font-size:10.8px;line-height:14px;color:#718096;transform:scaleX(0.9931);">Спецификация</span>
<span class="t" style="left:709.50px;top:221.16px;font-size:10.8px;line-height:14px;color:#718096;transform:scaleX(1.0385);">асинхронного</span>
<span class="t" style="left:785.00px;top:221.16px;font-size:10.8px;line-height:14px;color:#718096;transform:scaleX(1.0172);">обмена</span>
<span class="t" style="left:826.80px;top:221.16px;font-size:10.8px;line-height:14px;color:#718096;transform:scaleX(1.0163);">данными</span>
<span class="t" style="left:876.80px;top:221.16px;font-size:10.8px;line-height:14px;color:#718096;transform:scaleX(1.0119);">через</span>
<span class="t" style="left:909.20px;top:221.16px;font-size:10.8px;line-height:14px;color:#718096;transform:scaleX(0.9342);">Kafka</span>
<span class="t" style="left:630.60px;top:291.91px;font-size:24.5px;line-height:32px;color:#4b525e;transform:scaleX(0.8577);">Servers</span>
<div style="position:absolute;left:630.60px;top:336.20px;width:385.60px;height:221.30px;background:#edf2f7;border-radius:3px;box-shadow:0 0 0 .8px rgba(60,80,110,.10),0 1px 3px rgba(0,0,0,.16),0 1px 2px rgba(0,0,0,.08);"></div>
<span class="t" style="left:644.00px;top:353.85px;font-size:11.4px;line-height:15px;color:#1f2937;transform:scaleX(1.0172);font-family:'Liberation Mono',monospace;-webkit-text-stroke:.3px #1f2937;">my-kafka.upstash.io:9092</span>
<div style="position:absolute;left:818.00px;top:349.00px;width:93.00px;height:20.70px;background:#38b2ac;border-radius:2.500px;"></div>
<span class="t" style="left:824.20px;top:353.36px;font-size:10.8px;line-height:14px;color:#fff;transform:scaleX(0.9328);font-weight:700;-webkit-text-stroke:.2px #fff;">KAFKA-SECURE</span>
<div style="position:absolute;left:917.50px;top:349.00px;width:34.50px;height:20.70px;background:#4299e1;border-radius:2.500px;"></div>
<span class="t" style="left:924.00px;top:353.36px;font-size:10.8px;line-height:14px;color:#fff;transform:scaleX(0.9591);font-weight:700;-webkit-text-stroke:.2px #fff;">DEV</span>
<span class="t" style="left:643.80px;top:380.96px;font-size:10.8px;line-height:14px;color:#718096;transform:scaleX(1.0098);">параметры</span>
<span class="t" style="left:703.80px;top:380.96px;font-size:10.8px;line-height:14px;color:#718096;transform:scaleX(1.0325);">брокера</span>
<span class="t" style="left:749.60px;top:380.96px;font-size:10.8px;line-height:14px;color:#718096;transform:scaleX(0.9487);">Kafka</span>
<span class="t" style="left:643.10px;top:410.16px;font-size:10.8px;line-height:14px;color:#4c5361;">Security:</span>
<span class="t" style="left:643.10px;top:433.46px;font-size:10.8px;line-height:14px;color:#333a47;transform:scaleX(0.9687);">ScramSha256</span>
<div style="position:absolute;left:718.80px;top:433.00px;width:179.80px;height:12.20px;background:#63b3ed;border-radius:3px;"></div>
<span class="t" style="left:725.20px;top:434.14px;font-size:9.7px;line-height:13px;color:#fff;transform:scaleX(0.9299);font-weight:700;">REQUIRED SCOPES: SCRAM-SHA-256</span>
<span class="t" style="left:643.30px;top:451.26px;font-size:10.8px;line-height:14px;color:#4c5361;transform:scaleX(1.0557);">протокол</span>
<span class="t" style="left:695.00px;top:451.26px;font-size:10.8px;line-height:14px;color:#4c5361;transform:scaleX(1.0252);">безопасности</span>
<span class="t" style="left:768.00px;top:451.26px;font-size:10.8px;line-height:14px;color:#4c5361;transform:scaleX(0.8310);">SASL_SSL,</span>
<span class="t" style="left:819.30px;top:451.26px;font-size:10.8px;line-height:14px;color:#4c5361;transform:scaleX(1.0378);">механизм</span>
<span class="t" style="left:873.00px;top:451.26px;font-size:10.8px;line-height:14px;color:#4c5361;transform:scaleX(1.0179);">безопасности</span>
<span class="t" style="left:946.00px;top:451.26px;font-size:10.8px;line-height:14px;color:#4c5361;transform:scaleX(0.9577);">SCRAM-</span>
<span class="t" style="left:643.10px;top:470.46px;font-size:10.8px;line-height:14px;color:#4c5361;transform:scaleX(0.9880);">SHA-256</span>
<div style="position:absolute;left:650.70px;top:485.00px;width:351.30px;height:51.80px;background:#f7fafc;border-radius:2.500px;box-shadow:0 0 0 .8px rgba(60,80,110,.09),0 1px 2px rgba(0,0,0,.12);"></div>
<span class="t" style="left:663.00px;top:499.84px;font-size:9.7px;line-height:13px;color:#566070;transform:scaleX(0.8962);font-weight:700;">SECURITY.PROTOCOL:</span>
<div style="position:absolute;left:766.60px;top:498.20px;width:48.40px;height:12.40px;background:#7a97f3;border-radius:3px;"></div>
<span class="t" style="left:769.80px;top:499.64px;font-size:9.7px;line-height:13px;color:#fff;transform:scaleX(0.8338);font-weight:700;">SASL_SSL</span>
<span class="t" style="left:663.00px;top:518.34px;font-size:9.7px;line-height:13px;color:#566070;transform:scaleX(0.9442);font-weight:700;">SASL.MECHANISM:</span>
<div style="position:absolute;left:756.00px;top:517.20px;width:84.00px;height:12.40px;background:#7a97f3;border-radius:3px;"></div>
<span class="t" style="left:758.60px;top:518.44px;font-size:9.7px;line-height:13px;color:#fff;font-weight:700;">SCRAM-SHA-256</span>
</main>
</div>
</body>
</html>
